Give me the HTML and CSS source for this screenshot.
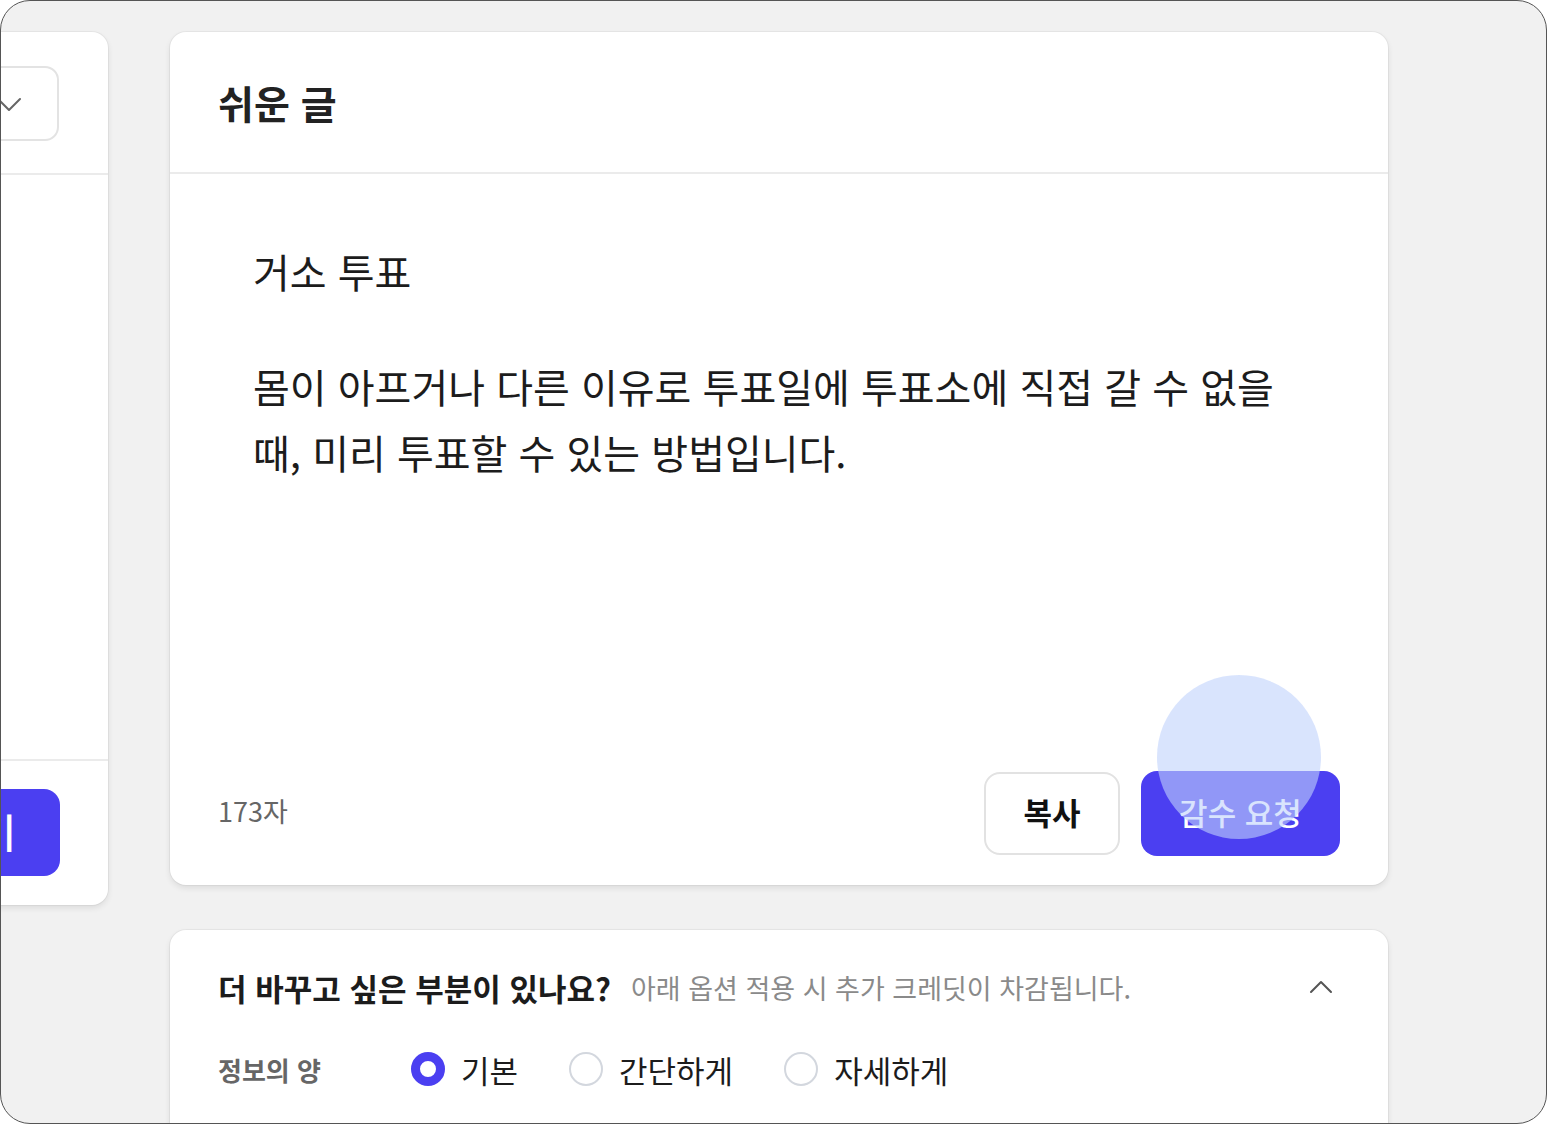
FILE: index.html
```html
<!DOCTYPE html>
<html lang="ko">
  <head>
    <meta charset="UTF-8" />
    <meta name="viewport" content="width=device-width, initial-scale=1.0" />
    <title>쉬운 글</title>
    <link rel="stylesheet" href="styles.css">
  </head>
  <body>
    <div class="screen">
      <aside class="side-card">
        <div class="side-head">
          <div class="select-box">
            <span>원문 선택</span>
            <svg class="chev" width="26" height="26" viewBox="0 0 26 26">
              <path d="M2 8l11 11 11-11" fill="none" stroke="#666" stroke-width="2" stroke-linecap="round" stroke-linejoin="round" />
            </svg>
          </div>
        </div>
        <div class="side-body"></div>
        <div class="side-foot">
          <button class="btn-primary side-btn">쉬운 글로 바꾸기</button>
        </div>
      </aside>

      <main class="main-col">
        <section class="card result-card">
          <div class="card-head">
            <h2>쉬운 글</h2>
          </div>
          <div class="card-body">
            <p class="doc-title">거소 투표</p>
            <p class="doc-text">몸이 아프거나 다른 이유로 투표일에 투표소에 직접 갈 수 없을 때, 미리 투표할 수 있는 방법입니다.</p>
          </div>
          <div class="card-foot">
            <span class="count">173자</span>
            <div class="actions">
              <button class="btn-outline">복사</button>
              <button class="btn-primary review-btn">
                감수 요청
                <span class="ripple"></span>
              </button>
            </div>
          </div>
        </section>

        <section class="card options-card">
          <div class="options-head">
            <h3>더 바꾸고 싶은 부분이 있나요?</h3>
            <span class="hint">아래 옵션 적용 시 추가 크레딧이 차감됩니다.</span>
            <svg class="toggle" width="24" height="24" viewBox="0 0 24 24">
              <path d="M2 17L12 7l10 10" fill="none" stroke="#555" stroke-width="2" stroke-linecap="round" stroke-linejoin="round" />
            </svg>
          </div>
          <div class="option-row">
            <span class="option-label">정보의 양</span>
            <label class="radio"><input type="radio" name="amount" checked /> 기본</label>
            <label class="radio"><input type="radio" name="amount" /> 간단하게</label>
            <label class="radio"><input type="radio" name="amount" /> 자세하게</label>
          </div>
        </section>
      </main>
    </div>
  </body>
</html>
```

FILE: styles.css
```css
* {
  box-sizing: border-box;
}
body {
  margin: 0;
  background: #fff;
  font-family: "Noto Sans CJK KR", "Noto Sans", sans-serif;
  color: #1f1f1f;
}
.screen {
  width: 1547px;
  height: 1124px;
  border: 1px solid #555;
  border-radius: 30px;
  background: #f1f1f1;
  overflow: hidden;
  display: flex;
  align-items: flex-start;
  gap: 62px;
  padding-top: 31px;
}

/* shared buttons */
.btn-outline,
.btn-primary {
  display: flex;
  align-items: center;
  justify-content: center;
  font-family: inherit;
  border-radius: 16px;
  cursor: pointer;
  padding: 0 0 5px;
}
.btn-outline {
  width: 136px;
  height: 83px;
  background: #fff;
  border: 2px solid #e2e2e2;
  font-size: 31px;
  font-weight: 700;
  color: #111;
}
.btn-primary {
  background: #4b3ff1;
  border: none;
  color: #fff;
  font-size: 31px;
  font-weight: 500;
}

/* left panel, mostly scrolled out of view */
.side-card {
  width: 400px;
  height: 873px;
  margin-left: -293px;
  flex-shrink: 0;
  background: #fff;
  border-radius: 16px;
  box-shadow: 0 0 0 1px rgba(0, 0, 0, 0.04), 0 3px 6px rgba(0, 0, 0, 0.09);
  display: flex;
  flex-direction: column;
}
.side-head {
  height: 143px;
  padding: 34px 49px 0 0;
  border-bottom: 2px solid #ebebeb;
  display: flex;
  justify-content: flex-end;
}
.select-box {
  width: 320px;
  height: 75px;
  border: 2px solid #e3e3e3;
  border-radius: 14px;
  display: flex;
  align-items: center;
  justify-content: space-between;
  padding: 0 35px 0 24px;
  font-size: 26px;
  color: #333;
}
.side-body {
  flex: 1;
}
.side-foot {
  border-top: 2px solid #ebebeb;
  padding: 28px 48px 29px 0;
}
.side-foot .side-btn {
  width: 100%;
  height: 87px;
  justify-content: flex-end;
  padding: 0 44px 4px 0;
  font-size: 40px;
  white-space: nowrap;
}

.main-col {
  width: 1218px;
  flex-shrink: 0;
  display: flex;
  flex-direction: column;
  gap: 45px;
}
.card {
  background: #fff;
  border-radius: 16px;
  box-shadow: 0 0 0 1px rgba(0, 0, 0, 0.04), 0 3px 6px rgba(0, 0, 0, 0.09);
}
.result-card {
  height: 853px;
  display: flex;
  flex-direction: column;
}
.card-head {
  height: 142px;
  border-bottom: 2px solid #ebebeb;
  padding-left: 48px;
  display: flex;
  align-items: center;
}
.card-head h2 {
  margin: 0;
  font-size: 39px;
  font-weight: 700;
  color: #222;
}
.card-body {
  flex: 1;
  padding: 64px 83px 0;
  font-size: 40px;
  line-height: 66px;
  color: #1c1c1c;
}
.card-body p {
  margin: 0;
}
.card-body .doc-text {
  margin-top: 49px;
}
.card-foot {
  display: flex;
  align-items: center;
  justify-content: space-between;
  padding: 0 48px 29px;
}
.count {
  font-size: 27px;
  color: #666;
  margin-top: -6px;
}
.actions {
  display: flex;
  align-items: center;
  gap: 21px;
}
.review-btn {
  position: relative;
  width: 199px;
  height: 85px;
}
/* touch highlight over the pressed button */
.ripple {
  position: absolute;
  left: 16px;
  top: -96px;
  width: 164px;
  height: 164px;
  border-radius: 50%;
  background: rgba(191, 210, 251, 0.6);
  pointer-events: none;
}

.options-card {
  height: 240px;
  padding: 37px 55px 0 48px;
}
.options-head {
  display: flex;
  align-items: center;
  height: 40px;
}
.options-head h3 {
  margin: 0;
  font-size: 31px;
  font-weight: 700;
  color: #1c1c1c;
}
.hint {
  margin-left: 20px;
  font-size: 27px;
  color: #8a8a8a;
}
.toggle {
  margin-left: auto;
}
.option-row {
  margin-top: 42px;
  height: 40px;
  display: flex;
  align-items: center;
}
.option-label {
  width: 193px;
  font-size: 26px;
  font-weight: 700;
  color: #666;
}
.radio {
  display: flex;
  align-items: center;
  gap: 16px;
  margin-right: 51px;
  font-size: 31px;
  color: #1c1c1c;
}
.radio input {
  appearance: none;
  margin: 0;
  width: 34px;
  height: 34px;
  border-radius: 50%;
  border: 2px solid #d3d7de;
  background: #fff;
}
.radio input:checked {
  border: 9px solid #4b3ff1;
}
```
